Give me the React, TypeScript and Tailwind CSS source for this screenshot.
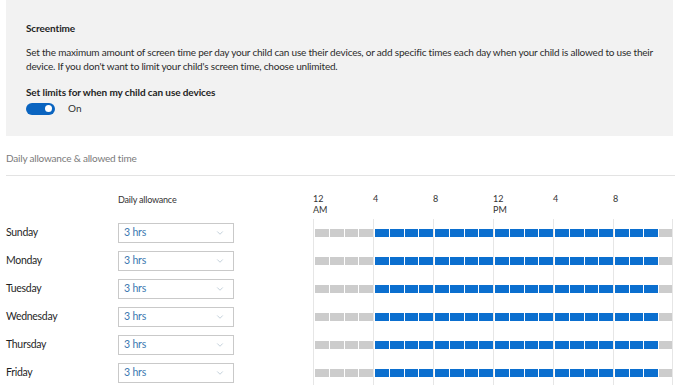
import { ChevronDown } from 'lucide-react'

const days = ['Sunday', 'Monday', 'Tuesday', 'Wednesday', 'Thursday', 'Friday']
const ticks = [
  ['12', 'AM'],
  ['4', ''],
  ['8', ''],
  ['12', 'PM'],
  ['4', ''],
  ['8', ''],
]

// hours 4..22 are allowed
const allowed = (h: number) => h >= 4 && h <= 22

function Toggle() {
  return (
    <div className="flex items-center gap-[13px]">
      <div className="flex h-[12px] w-[29px] items-center justify-end rounded-full bg-[#0a64c0] pr-[3px]">
        <div className="h-[7px] w-[7px] rounded-full bg-white" />
      </div>
      <span className="text-[10px] text-[#333]">On</span>
    </div>
  )
}

function Allowance() {
  return (
    <div className="flex h-[20px] w-[116px] items-center justify-between border border-[#c9c9c9] bg-white pl-[5px] pr-[8px]">
      <span className="text-[10.5px] tracking-[-0.2px] text-[#3b78b0]">3 hrs</span>
      <ChevronDown size={10} strokeWidth={1.5} className="text-[#9fb3c4]" />
    </div>
  )
}

function Timeline() {
  return (
    <div className="flex">
      {[0, 1, 2, 3, 4, 5].map((b) => (
        <div
          key={b}
          className={`flex h-[28px] w-[60px] items-center gap-px border-l border-[#e6e6e6] pl-px ${b === 5 ? 'border-r' : ''}`}
        >
          {[0, 1, 2, 3].map((i) => {
            const h = b * 4 + i
            return (
              <div
                key={i}
                className={`h-[8px] w-[14px] ${allowed(h) ? 'bg-[#0b6fcf]' : 'bg-[#cccccc]'}`}
              />
            )
          })}
        </div>
      ))}
    </div>
  )
}

export default function App() {
  return (
    <div
      className="h-[385px] w-[680px] overflow-hidden bg-white text-[#222]"
      style={{ fontFamily: 'Lato, "Noto Sans", sans-serif' }}
    >
      <div className="ml-[6px] h-[136px] w-[667px] bg-[#f2f2f2] pl-[20px] pt-[21px]">
        <h2 className="text-[10px] font-bold leading-[15px] tracking-[-0.1px] text-[#1f1f1f]">Screentime</h2>
        <p className="mt-[9px] w-[632px] text-[10px] leading-[14px] tracking-[-0.2px] text-[#2b2b2b]">
          Set the maximum amount of screen time per day your child can use their devices, or add specific times each day when your child is allowed to use their device. If you don't want to limit your child's screen time, choose unlimited.
        </p>
        <div className="mt-[12px] text-[10px] font-bold leading-[15px] tracking-[-0.1px] text-[#1f1f1f]">
          Set limits for when my child can use devices
        </div>
        <div className="mt-[1px]">
          <Toggle />
        </div>
      </div>

      <div className="ml-[6px] mt-[15px] text-[10px] leading-[15px] tracking-[-0.2px] text-[#7a7a7a]">
        Daily allowance &amp; allowed time
      </div>
      <div className="ml-[6px] mt-[9px] h-px w-[669px] bg-[#e3e3e3]" />

      <div className="ml-[6px] mt-[17px] flex">
        <div className="w-[112px]" />
        <div className="w-[195px] text-[9px] leading-[13px] tracking-[-0.2px] text-[#333]">Daily allowance</div>
        <div className="flex">
          {ticks.map(([a, b], i) => (
            <div key={i} className="w-[60px] text-[9px] leading-[11px] text-[#333]">
              <div>{a}</div>
              <div>{b}</div>
            </div>
          ))}
        </div>
      </div>

      <div className="ml-[6px] mt-[4px] flex flex-col">
        {days.map((d) => (
          <div key={d} className="flex items-center">
            <div className="w-[112px] text-[10.5px] tracking-[-0.3px] text-[#1f1f1f]">{d}</div>
            <div className="w-[195px]">
              <Allowance />
            </div>
            <Timeline />
          </div>
        ))}
      </div>
    </div>
  )
}
